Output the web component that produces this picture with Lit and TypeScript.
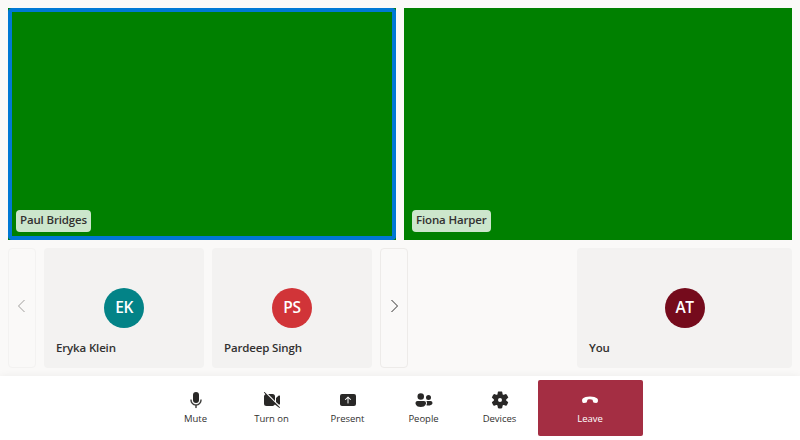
import { LitElement, html, svg, css } from "lit";
import { customElement } from "lit/decorators.js";
import { styleMap } from "lit/directives/style-map.js";

const icons = {
  mic: svg`<path d="M10 13a3 3 0 0 0 3-3V5a3 3 0 1 0-6 0v5a3 3 0 0 0 3 3z"/><path stroke="#292827" stroke-width=".3" d="M5 9.5c.28 0 .5.22.5.5a4.5 4.5 0 0 0 9 0 .5.5 0 0 1 1 0 5.5 5.5 0 0 1-5 5.48v2.02a.5.5 0 0 1-1 0v-2.02A5.5 5.5 0 0 1 4.500 10c0-.28.22-.5.5-.5z"/>`,
  videoOff: svg`<path d="M2.85 2.15a.5.5 0 1 0-.7.7l1.27 1.28A2.5 2.5 0 0 0 2 6.500v7A2.500 2.500 0 0 0 4.500 16h6a2.500 2.500 0 0 0 2.370-1.420l4.280 3.270a.5.5 0 0 0 .7-.7l-15-15z"/><path d="M13 6.500v4.380L6.120 4h4.380A2.500 2.500 0 0 1 13 6.500z"/><path d="M14 11.880V7.930l2.760-2.310a.75.75 0 0 1 1.240.57v7.600c0 .5-.4.900-.9.900z"/>`,
  present: svg`<path fill-rule="evenodd" d="M4 4a2 2 0 0 0-2 2v8c0 1.100.9 2 2 2h12a2 2 0 0 0 2-2V6a2 2 0 0 0-2-2H4zm6.350 2.650 2.500 2.500a.5.5 0 0 1-.7.7L10.500 8.210V13a.5.5 0 0 1-1 0V8.210L7.850 9.850a.5.5 0 1 1-.7-.7l2.500-2.500a.5.5 0 0 1 .7 0z"/>`,
  people: svg`<circle cx="6.750" cy="6.500" r="3.250"/><circle cx="14.500" cy="7.500" r="2.500"/><path d="M1.500 13c0-1.100.9-2 2-2H10a2 2 0 0 1 2 2s0 4-5.250 4-5.250-4-5.250-4z"/><path d="M13 13v.15a4 4 0 0 1-.04.450 5.300 5.300 0 0 1-.6 1.670c.58.140 1.280.230 2.140.230 4 0 4-2.500 4-2.500a2 2 0 0 0-2-2h-4.100c.37.500.6 1.200.6 2z"/>`,
  settings: svg`<path fill-rule="evenodd" d="M1.910 7.380a8.500 8.500 0 0 1 1.830-3.160.5.5 0 0 1 .54-.14l1.920.69a1 1 0 0 0 1.320-.76l.36-2a.5.5 0 0 1 .4-.4 8.530 8.530 0 0 1 3.550 0c.2.050.360.200.390.400l.370 2a1 1 0 0 0 1.320.760l1.920-.68a.5.5 0 0 1 .54.130 8.500 8.500 0 0 1 1.780 3.080c.6.200 0 .4-.15.540l-1.560 1.320a1 1 0 0 0 0 1.530l1.560 1.320a.5.5 0 0 1 .15.540 8.500 8.500 0 0 1-1.780 3.080.5.5 0 0 1-.54.130l-1.920-.68a1 1 0 0 0-1.320.76l-.37 2.010a.5.5 0 0 1-.39.400 8.530 8.530 0 0 1-3.550 0 .5.5 0 0 1-.4-.4l-.36-2.010a1 1 0 0 0-1.320-.76l-1.920.69a.5.5 0 0 1-.54-.14 8.500 8.500 0 0 1-1.790-3.080.5.5 0 0 1 .15-.54l1.570-1.320a1 1 0 0 0 0-1.530L2.060 7.840a.5.5 0 0 1-.15-.46zM8 10a2 2 0 1 0 4 0 2 2 0 0 0-4 0z"/>`,
  callEnd: svg`<path d="m17.960 10.940-.16.830c-.15.780-.87 1.280-1.700 1.200l-1.630-.16c-.72-.07-1.250-.59-1.470-1.330-.29-1-.5-1.750-.5-1.750A6.600 6.600 0 0 0 10 9.230c-.9 0-1.670.16-2.500.5 0 0-.2.750-.5 1.750-.21.740-.7 1.260-1.420 1.330l-1.630.16a1.530 1.530 0 0 1-1.700-1.200l-.17-.83c-.17-.84.060-1.690.68-2.320C4.160 7.180 6.600 6.500 10 6.500s5.830.700 7.280 2.120c.62.620.85 1.480.68 2.320z"/>`,
};

const controls = [
  { label: "Mute", icon: icons.mic },
  { label: "Turn on", icon: icons.videoOff },
  { label: "Present", icon: icons.present },
  { label: "People", icon: icons.people },
  { label: "Devices", icon: icons.settings },
];

const strip = [
  { name: "Eryka Klein", initials: "EK", color: "#038387" },
  { name: "Pardeep Singh", initials: "PS", color: "#d13438" },
];

@customElement("app-root")
export class AppRoot extends LitElement {
  static styles = css`
    :host {
      display: flex;
      flex-direction: column;
      height: 440px;
      overflow: hidden;
      background: #faf9f8;
      color: #323130;
      font-family: "Open Sans", "Noto Sans", sans-serif;
    }
    * { box-sizing: border-box; }
    button { font: inherit; color: inherit; margin: 0; padding: 0; background: none; border: 0; }
    .stage { display: flex; flex-direction: column; gap: 8px; height: 376px; padding: 8px; }
    .videos { display: grid; grid-template-columns: 1fr 1fr; gap: 8px; height: 232px; }
    .video { position: relative; background: #008000; }
    .speaking::after { content: ""; position: absolute; inset: 0; border: 4px solid #0078d4; border-radius: 4px; }
    .tag {
      position: absolute; left: 8px; bottom: 8px; height: 22px; padding: 0 4px;
      border-radius: 4px; background: rgba(255, 255, 255, 0.8);
      line-height: 20px;
    }
    .name { font-size: 11.5px; font-weight: 600; letter-spacing: -0.15px; white-space: nowrap; }
    .row { display: flex; gap: 8px; height: 120px; }
    .arrow {
      width: 28px; border: 1px solid #edebe9; border-radius: 4px;
      display: flex; align-items: center; justify-content: center;
    }
    .arrow svg { width: 16px; height: 16px; margin-bottom: 4px; fill: none; stroke: #323130; stroke-width: 1; }
    .disabled { border-color: #f3f2f1; }
    .disabled svg { stroke: #a19f9d; }
    .tile {
      position: relative; width: 160px; border-radius: 4px; background: #f3f2f1;
      display: flex; align-items: center; justify-content: center;
    }
    .self { width: 215px; margin-left: auto; }
    .avatar {
      width: 40px; height: 40px; border-radius: 50%; color: #fff;
      font-size: 15.5px; font-weight: 600; letter-spacing: -0.4px; line-height: 39px; text-align: center;
    }
    .tile .name { position: absolute; left: 12px; bottom: 10px; line-height: 20px; }
    .bar {
      height: 64px; padding: 4px 0; background: #fff; position: relative;
      display: flex; justify-content: center;
      box-shadow: 0 0 8px rgba(0, 0, 0, 0.06);
    }
    .control {
      width: 76px; height: 56px; display: flex; flex-direction: column;
      align-items: center; padding-top: 10px; font-size: 9.5px; letter-spacing: -0.03px; line-height: 17px;
    }
    .control svg { width: 20px; height: 20px; fill: #292827; display: block; }
    .leave { width: 105px; background: #a42e43; color: #fff; border-radius: 2px; }
    .leave svg { fill: #fff; }
  `;

  private tile(name: string, initials: string, color: string, self = false) {
    return html`<div class="tile ${self ? "self" : ""}">
      <div class="avatar" style=${styleMap({ backgroundColor: color })}>${initials}</div>
      <span class="name">${name}</span>
    </div>`;
  }

  private control(label: string, icon: unknown, extra = "") {
    return html`<button class="control ${extra}">
      <svg viewBox="0 0 20 20" aria-hidden="true">${icon}</svg><span>${label}</span>
    </button>`;
  }

  render() {
    return html`
      <main class="stage">
        <div class="videos">
          <div class="video speaking"><span class="tag name">Paul Bridges</span></div>
          <div class="video"><span class="tag name">Fiona Harper</span></div>
        </div>
        <div class="row">
          <button class="arrow disabled" disabled aria-label="Previous">
            <svg viewBox="0 0 16 16"><path d="M10.500 2 4.500 8l6 6"/></svg>
          </button>
          ${strip.map((p) => this.tile(p.name, p.initials, p.color))}
          <button class="arrow" aria-label="Next">
            <svg viewBox="0 0 16 16"><path d="m5.500 2 6 6-6 6"/></svg>
          </button>
          ${this.tile("You", "AT", "#750b1c", true)}
        </div>
      </main>
      <nav class="bar">
        ${controls.map((c) => this.control(c.label, c.icon))}
        ${this.control("Leave", icons.callEnd, "leave")}
      </nav>
    `;
  }
}
